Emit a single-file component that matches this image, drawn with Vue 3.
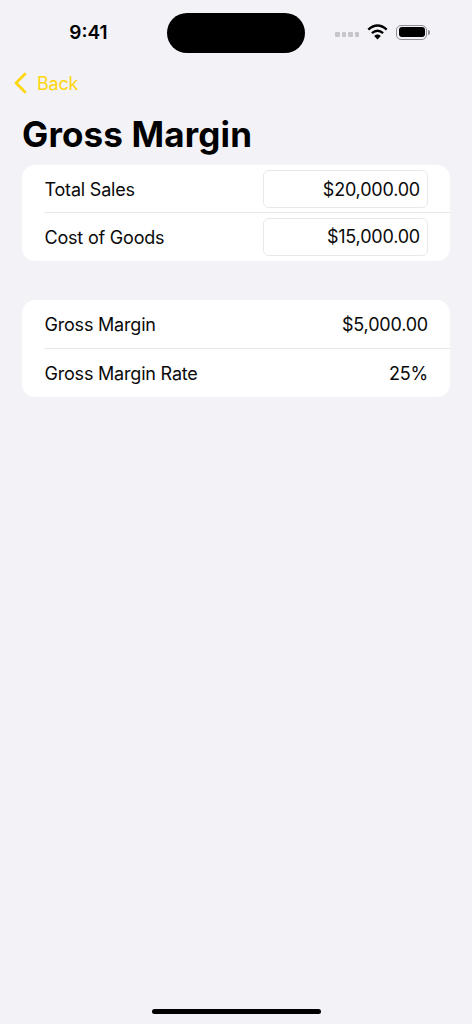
<template>
  <div class="screen">
    <div class="status-bar">
      <span class="time">9:41</span>
      <div class="island"></div>
      <div class="status-icons">
        <div class="dots"><i v-for="n in 4" :key="n"></i></div>
        <svg class="wifi" width="21" height="16" viewBox="0 0 21 16">
          <path d="M10.5 15.5 L7.2 11.9 Q10.5 9 13.8 11.9 Z" fill="#000" />
          <path d="M4.9 9.2 Q10.5 4.2 16.1 9.2" fill="none" stroke="#000" stroke-width="2.4" />
          <path d="M1.3 5.6 Q10.5 -2.6 19.7 5.6" fill="none" stroke="#000" stroke-width="2.4" />
        </svg>
        <div class="battery"><div class="battery-fill"></div></div>
        <div class="battery-cap"></div>
      </div>
    </div>

    <div class="nav">
      <svg width="14" height="22" viewBox="0 0 14 22">
        <path d="M12 2 L3 11 L12 20" fill="none" stroke="#ffd60a" stroke-width="2.6" stroke-linecap="round" stroke-linejoin="round" />
      </svg>
      <span class="back">Back</span>
    </div>

    <h1 class="title">Gross Margin</h1>

    <div class="card inputs">
      <div v-for="row in inputs" :key="row.label" class="row">
        <span class="label">{{ row.label }}</span>
        <div class="field">{{ row.value }}</div>
      </div>
    </div>

    <div class="card results">
      <div v-for="row in results" :key="row.label" class="row">
        <span class="label">{{ row.label }}</span>
        <span>{{ row.value }}</span>
      </div>
    </div>

    <div class="spacer"></div>
    <div class="home-bar"></div>
  </div>
</template>

<script setup>
const inputs = [
  { label: 'Total Sales', value: '$20,000.00' },
  { label: 'Cost of Goods', value: '$15,000.00' }
];

const results = [
  { label: 'Gross Margin', value: '$5,000.00' },
  { label: 'Gross Margin Rate', value: '25%' }
];
</script>

<style>
html, body {
  margin: 0;
  background: #f2f2f7;
}
</style>

<style scoped>
.screen {
  width: 472px;
  height: 1024px;
  background: #f2f2f7;
  display: flex;
  flex-direction: column;
  font-family: Inter, "Liberation Sans", sans-serif;
  color: #000;
  overflow: hidden;
}

.status-bar {
  height: 65px;
  flex-shrink: 0;
  box-sizing: border-box;
  padding-top: 13px;
  display: flex;
  align-items: flex-start;
}
.time {
  width: 167px;
  height: 40px;
  line-height: 39px;
  text-align: center;
  padding-left: 10px;
  box-sizing: border-box;
  font-size: 19px;
  font-weight: 600;
}
.island {
  width: 138px;
  height: 40px;
  border-radius: 20px;
  background: #000;
}
.status-icons {
  margin-left: 30px;
  height: 38px;
  display: flex;
  align-items: center;
}
.dots {
  display: flex;
  gap: 2px;
  margin-top: 5px;
}
.dots i {
  width: 4.5px;
  height: 4.5px;
  border-radius: 1px;
  background: #c5c5ca;
}
.wifi {
  margin-left: 8px;
  margin-top: -1px;
}
.battery {
  margin-left: 8px;
  width: 31px;
  height: 15px;
  box-sizing: border-box;
  border: 1px solid #8e8e93;
  border-radius: 5px;
  padding: 1.5px;
}
.battery-fill {
  height: 100%;
  border-radius: 3px;
  background: #000;
}
.battery-cap {
  width: 2px;
  height: 5px;
  margin-left: 1px;
  border-radius: 0 2px 2px 0;
  background: #8e8e93;
}

.nav {
  height: 36px;
  flex-shrink: 0;
  display: flex;
  align-items: center;
  padding-left: 13px;
}
.back {
  margin-left: 10px;
  font-size: 18px;
  letter-spacing: -0.2px;
  color: #ffd60a;
}

.title {
  height: 64px;
  margin: 0;
  flex-shrink: 0;
  padding-left: 22px;
  line-height: 66px;
  font-size: 35px;
  font-weight: 700;
  letter-spacing: 0.15px;
}

.card {
  margin: 0 22px;
  flex-shrink: 0;
  background: #fff;
  border-radius: 13px;
  overflow: hidden;
}
.results {
  margin-top: 39px;
}
.row {
  box-sizing: border-box;
  height: 48px;
  margin-left: 22px;
  padding-right: 22px;
  display: flex;
  align-items: center;
  justify-content: space-between;
  font-size: 18px;
  letter-spacing: -0.2px;
  color: #0a0a0a;
}
.inputs .row {
  height: 47px;
}
.row + .row,
.inputs .row + .row {
  height: 49px;
  border-top: 1px solid #e8e8ea;
}
.label {
  padding-left: 0.5px;
}
.inputs .row:first-child .label {
  padding-top: 2px;
}
.field {
  width: 165px;
  height: 38px;
  box-sizing: border-box;
  border: 1px solid #e8e8ea;
  border-radius: 6px;
  padding-right: 7px;
  text-align: right;
  line-height: 36px;
}
.inputs .row:first-child .field {
  line-height: 38px;
}

.spacer {
  flex: 1;
}
.home-bar {
  width: 169px;
  height: 5px;
  margin: 0 auto 10px;
  border-radius: 3px;
  background: #000;
}
</style>
